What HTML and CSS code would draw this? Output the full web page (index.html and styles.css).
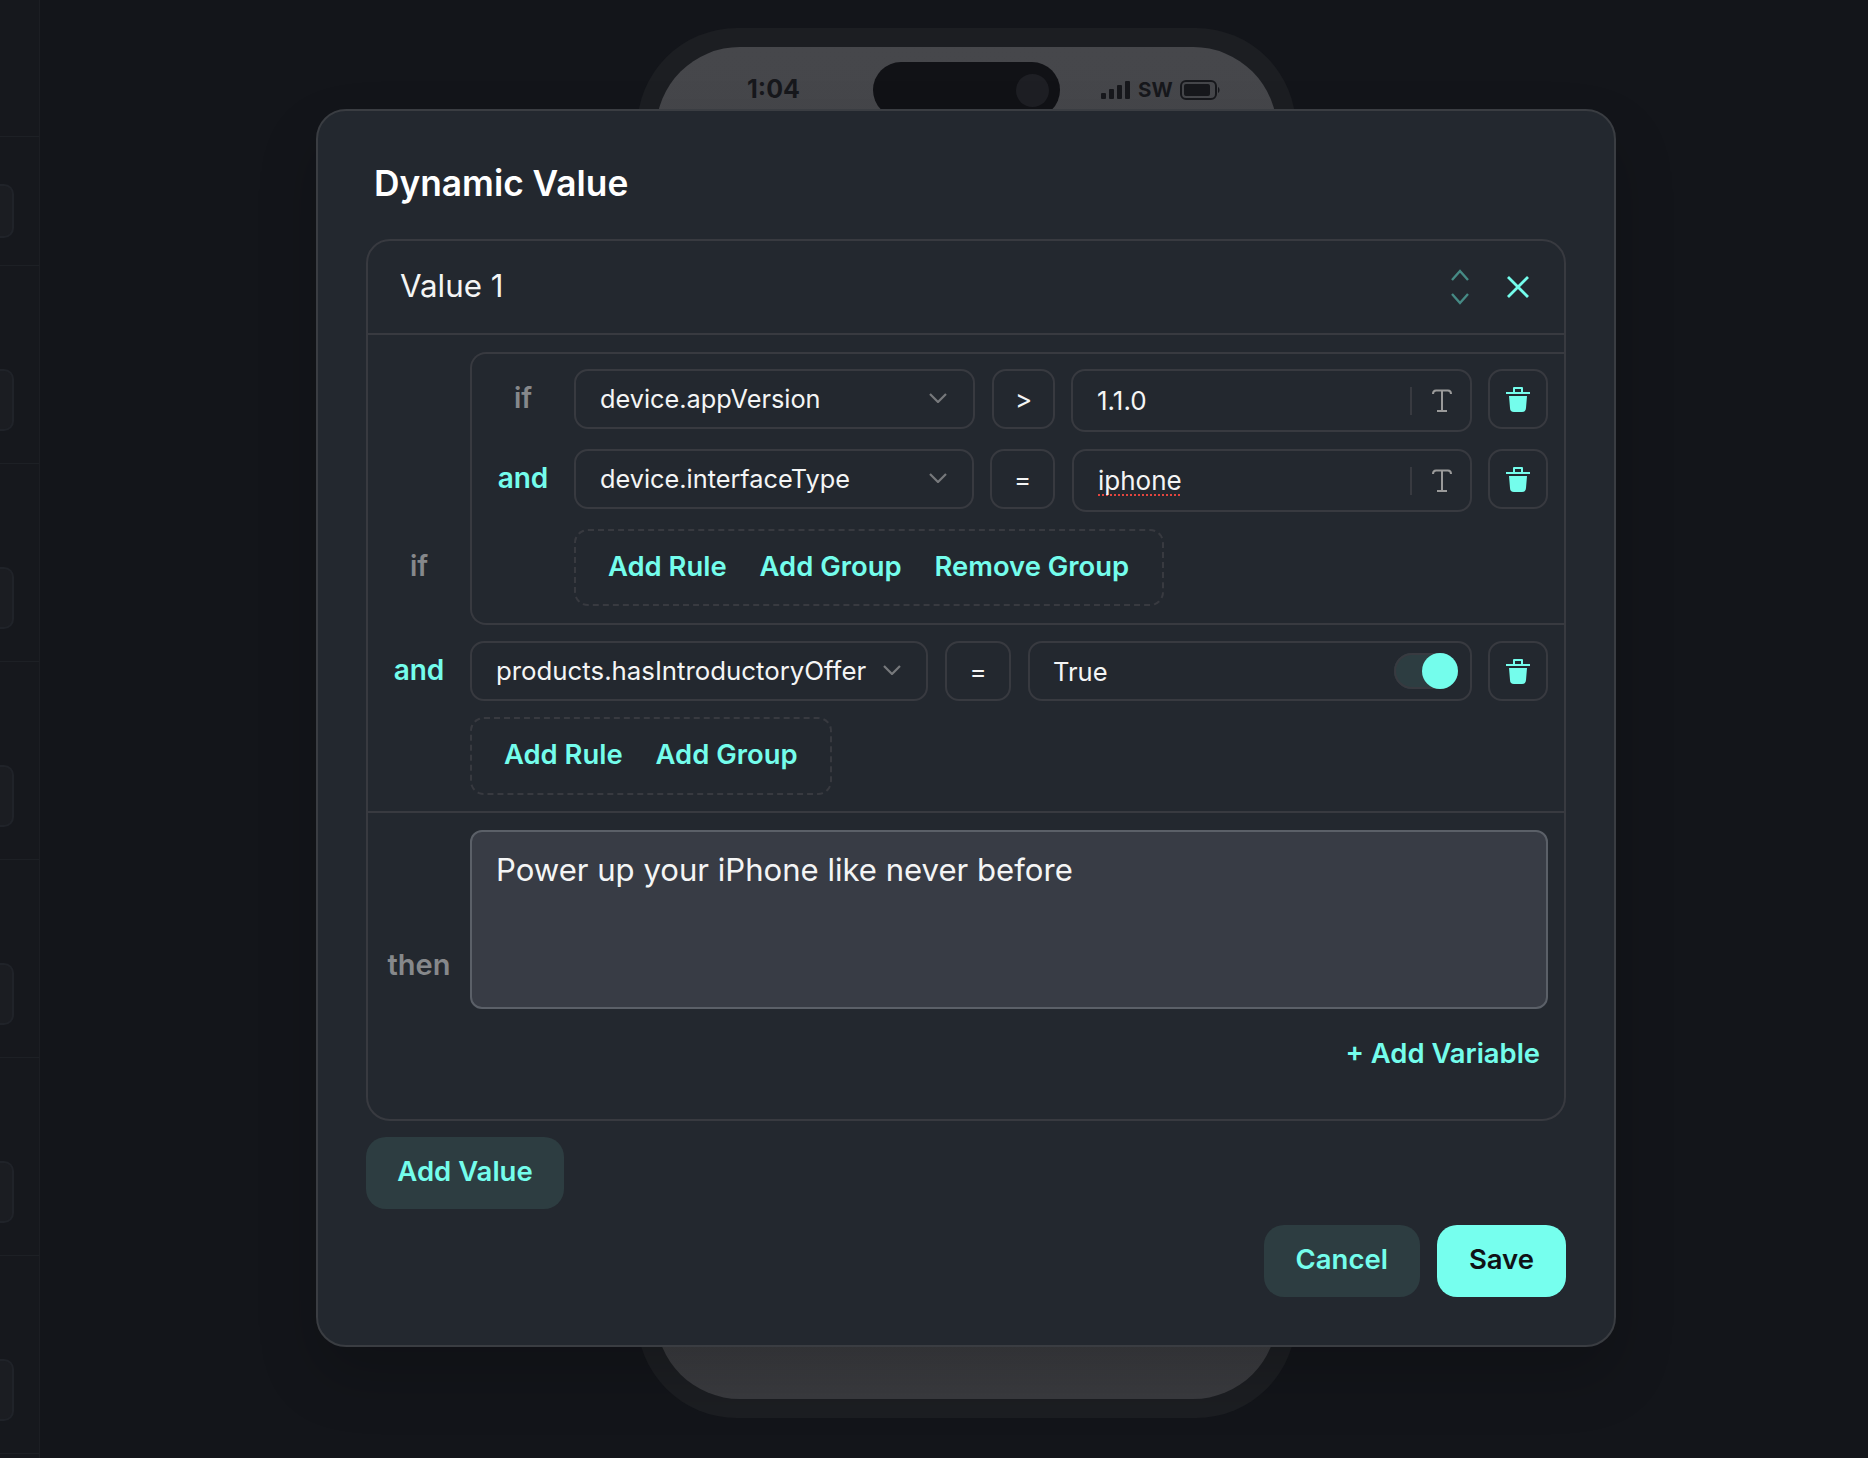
FILE: index.html
```html
<!DOCTYPE html>
<html lang="en">
<head>
    <meta charset="UTF-8">
    <meta name="viewport" content="width=device-width, initial-scale=1.0">
    <title>Dynamic Value</title>
    <link rel="stylesheet" href="styles.css">
</head>
<body>
    <aside class="sidebar">
        <div class="side-row side-row-top"></div>
        <div class="side-row side-row-short"><span class="side-thumb"></span></div>
        <div class="side-row"><span class="side-thumb"></span></div>
        <div class="side-row"><span class="side-thumb"></span></div>
        <div class="side-row"><span class="side-thumb"></span></div>
        <div class="side-row"><span class="side-thumb"></span></div>
        <div class="side-row"><span class="side-thumb"></span></div>
        <div class="side-row"><span class="side-thumb"></span></div>
    </aside>

    <main class="stage">
        <div class="phone">
            <div class="phone-screen">
                <div class="status-bar">
                    <span class="status-time">1:04</span>
                    <div class="island"><span class="camera"></span></div>
                    <div class="status-right">
                        <svg class="signal" width="30" height="18" viewBox="0 0 30 18"><rect x="0" y="12" width="5" height="6" rx="1"/><rect x="8" y="8" width="5" height="10" rx="1"/><rect x="16" y="4" width="5" height="14" rx="1"/><rect x="24" y="0" width="5" height="18" rx="1"/></svg>
                        <span class="carrier">SW</span>
                        <svg class="battery" width="40" height="20" viewBox="0 0 40 20"><rect x="1" y="1" width="35" height="18" rx="5" fill="none" stroke="#17181c" stroke-width="2"/><rect x="4" y="4" width="26" height="12" rx="2" fill="#17181c"/><path d="M38 7 C40 8 40 12 38 13 Z" fill="#17181c"/></svg>
                    </div>
                </div>
            </div>
        </div>
    </main>

    <section class="modal">
        <h1 class="modal-title">Dynamic Value</h1>

        <div class="value-card">
            <header class="value-head">
                <span class="value-name">Value 1</span>
                <svg class="sort-icon" width="20" height="36" viewBox="0 0 20 36" fill="none" stroke="#468a85" stroke-width="2.4"><path d="M2 11 L10 2 L18 11"/><path d="M2 25 L10 34 L18 25"/></svg>
                <svg class="close-icon" width="24" height="24" viewBox="0 0 24 24" fill="none" stroke="#74fdec" stroke-width="2.8"><path d="M2 2 L22 22 M22 2 L2 22"/></svg>
            </header>

            <div class="rules">
                <div class="rule-line rule-line-group">
                    <span class="joiner joiner-if joiner-outer">if</span>
                    <div class="group">
                        <div class="rule-line">
                            <span class="joiner joiner-if joiner-inner">if</span>
                            <div class="field select select-first"><span>device.appVersion</span>
                                <svg class="chev" width="18" height="10" viewBox="0 0 18 10" fill="none" stroke="#77797c" stroke-width="2.2"><path d="M1 1 L9 9 L17 1"/></svg>
                            </div>
                            <div class="field op op-a">&gt;</div>
                            <div class="field input input-first"><span>1.1.0</span>
                                <span class="input-sep"></span>
                                <svg class="type-icon" width="20" height="23" viewBox="0 0 20 23" fill="none" stroke="#9a9a9a" stroke-width="2"><path d="M1 5 Q1 1.500 4 1.500 H16 Q19 1.500 19 5 M10 1.500 V22 M5 22 H15"/></svg>
                            </div>
                            <button class="field trash">
                                <svg width="24" height="25" viewBox="0 0 24 25" fill="#74fdec"><path d="M0 5 H7 V1 Q7 0 8 0 H16 Q17 0 17 1 V5 H24 V7 H0 Z M9 2 V5 H15 V2 Z"/><path d="M3 9 H21 L20 21 Q20 25 16 25 H8 Q4 25 4 21 Z"/></svg>
                            </button>
                        </div>
                        <div class="rule-line">
                            <span class="joiner joiner-and joiner-inner">and</span>
                            <div class="field select select-second"><span>device.interfaceType</span>
                                <svg class="chev" width="18" height="10" viewBox="0 0 18 10" fill="none" stroke="#77797c" stroke-width="2.2"><path d="M1 1 L9 9 L17 1"/></svg>
                            </div>
                            <div class="field op op-b">=</div>
                            <div class="field input"><span class="misspelled">iphone</span>
                                <span class="input-sep"></span>
                                <svg class="type-icon" width="20" height="23" viewBox="0 0 20 23" fill="none" stroke="#9a9a9a" stroke-width="2"><path d="M1 5 Q1 1.500 4 1.500 H16 Q19 1.500 19 5 M10 1.500 V22 M5 22 H15"/></svg>
                            </div>
                            <button class="field trash">
                                <svg width="24" height="25" viewBox="0 0 24 25" fill="#74fdec"><path d="M0 5 H7 V1 Q7 0 8 0 H16 Q17 0 17 1 V5 H24 V7 H0 Z M9 2 V5 H15 V2 Z"/><path d="M3 9 H21 L20 21 Q20 25 16 25 H8 Q4 25 4 21 Z"/></svg>
                            </button>
                        </div>
                        <div class="actions actions-inner">
                            <a class="link">Add Rule</a>
                            <a class="link">Add Group</a>
                            <a class="link">Remove Group</a>
                        </div>
                    </div>
                </div>

                <div class="rule-line rule-line-outer">
                    <span class="joiner joiner-and joiner-outer joiner-mid">and</span>
                    <div class="field select select-products"><span>products.hasIntroductoryOffer</span>
                        <svg class="chev" width="18" height="10" viewBox="0 0 18 10" fill="none" stroke="#77797c" stroke-width="2.2"><path d="M1 1 L9 9 L17 1"/></svg>
                    </div>
                    <div class="field op op-c">=</div>
                    <div class="field input input-bool"><span>True</span>
                        <span class="toggle"><span class="toggle-knob"></span></span>
                    </div>
                    <button class="field trash">
                        <svg width="24" height="25" viewBox="0 0 24 25" fill="#74fdec"><path d="M0 5 H7 V1 Q7 0 8 0 H16 Q17 0 17 1 V5 H24 V7 H0 Z M9 2 V5 H15 V2 Z"/><path d="M3 9 H21 L20 21 Q20 25 16 25 H8 Q4 25 4 21 Z"/></svg>
                    </button>
                </div>

                <div class="actions actions-outer">
                    <a class="link">Add Rule</a>
                    <a class="link">Add Group</a>
                </div>
            </div>

            <div class="then-block">
                <span class="joiner joiner-then">then</span>
                <div class="then-text">Power up your iPhone like never before</div>
            </div>
            <div class="variable-line"><a class="link">+ Add Variable</a></div>
        </div>

        <button class="btn btn-soft btn-add">Add Value</button>

        <footer class="modal-foot">
            <button class="btn btn-soft">Cancel</button>
            <button class="btn btn-solid">Save</button>
        </footer>
    </section>
</body>
</html>
```

FILE: styles.css
```css
* {
    box-sizing: border-box;
}
body {
    margin: 0;
    width: 1868px;
    height: 1458px;
    overflow: hidden;
    display: flex;
    background: #13151a;
    color: #f4f5f5;
    font-family: Inter, "Noto Sans", sans-serif;
}

/* faded app behind the dialog */
.sidebar {
    width: 40px;
    flex: none;
    background: #16181d;
    border-right: 1px solid #1c1e23;
}
.side-row {
    height: 198px;
    display: flex;
    align-items: flex-end;
    padding-bottom: 32px;
    border-bottom: 1px solid #1d2025;
}
.side-row-top {
    height: 137px;
}
.side-row-short {
    height: 129px;
    padding-bottom: 27px;
}
.side-row-short .side-thumb {
    height: 54px;
}
.side-thumb {
    width: 14px;
    height: 62px;
    background: #1b1d22;
    border: 2px solid #202329;
    border-left: 0;
    border-radius: 0 10px 10px 0;
}

.stage {
    flex: 1;
    display: flex;
    justify-content: center;
    padding-top: 28px;
}
.phone {
    width: 659px;
    height: 1390px;
    margin-left: 25px;
    padding: 19px;
    background: #1c1e22;
    border-radius: 100px;
}
.phone-screen {
    height: 100%;
    background: linear-gradient(#46474b, #3a3b3f);
    border-radius: 84px;
    padding-top: 15px;
}
.status-bar {
    display: flex;
    align-items: flex-start;
    color: #17181c;
}
.status-time {
    width: 217px;
    padding: 12px 0 0 91px;
    font-size: 25px;
    font-weight: 700;
    line-height: 30px;
}
.island {
    width: 187px;
    height: 56px;
    display: flex;
    align-items: center;
    justify-content: flex-end;
    padding-right: 11px;
    background: #111216;
    border-radius: 28px;
}
.camera {
    width: 33px;
    height: 33px;
    border-radius: 50%;
    background: #1e1f24;
}
.status-right {
    display: flex;
    align-items: center;
    gap: 7px;
    padding: 18px 0 0 41px;
}
.signal {
    fill: #17181c;
}
.carrier {
    font-size: 20.500px;
    font-weight: 700;
    line-height: 18px;
}

/* dialog */
.modal {
    position: absolute;
    left: 316px;
    top: 109px;
    width: 1300px;
    height: 1238px;
    padding: 0 48px;
    background: #23282f;
    border: 2px solid #3a3d42;
    border-radius: 30px;
    box-shadow: 0 30px 60px rgba(0, 0, 0, 0.18);
}
.modal-title {
    margin: 0;
    height: 128px;
    padding-left: 8px;
    font-size: 35.300px;
    font-weight: 600;
    line-height: 145px;
    color: #fff;
}
.value-card {
    height: 882px;
    border: 2px solid #383a40;
    border-radius: 24px;
}
.value-head {
    height: 94px;
    display: flex;
    align-items: center;
    padding: 0 34px 1px 32px;
    border-bottom: 2px solid #383a40;
}
.value-name {
    flex: 1;
    margin-bottom: 1px;
    font-size: 31.300px;
}
.sort-icon {
    margin-right: 36px;
}

.rules {
    padding: 17px 0 16px;
    border-bottom: 2px solid #383a40;
    display: flex;
    flex-direction: column;
}
.rule-line {
    display: flex;
    align-items: flex-start;
}
.rule-line-group {
    margin-bottom: 16px;
}
.rule-line-outer {
    padding-right: 16px;
    margin-bottom: 16px;
}
.group {
    flex: 1;
    display: flex;
    flex-direction: column;
    gap: 17px;
    padding: 15px 16px 17px 0;
    border: 2px solid #383a40;
    border-right: 0;
    border-radius: 16px 0 0 16px;
}
.joiner {
    flex: none;
    text-align: center;
    font-size: 28px;
    font-weight: 600;
    line-height: 32px;
}
.joiner-if,
.joiner-then {
    color: #86888b;
}
.joiner-and {
    color: #74fdec;
}
.joiner-outer {
    width: 102px;
    align-self: flex-end;
    margin-bottom: 43px;
}
.joiner-mid {
    align-self: center;
    margin-bottom: 2px;
}
.joiner-inner {
    width: 102px;
    margin-top: 13px;
}

.field {
    height: 60px;
    display: flex;
    align-items: center;
    flex: none;
    background: none;
    border: 2px solid #383a40;
    border-radius: 14px;
    font: inherit;
    font-size: 26px;
    color: #f4f5f5;
}
.select {
    justify-content: space-between;
    padding: 0 25px 2px 24px;
    font-size: 25.300px;
}
.select-first {
    width: 401px;
    padding-right: 26px;
}
.select-second {
    width: 400px;
}
.select-products {
    width: 458px;
    padding-right: 25px;
    font-size: 25.800px;
}
.op {
    justify-content: center;
}
.op-a {
    width: 63px;
    margin-left: 17px;
}
.op-b {
    width: 65px;
    margin-left: 16px;
}
.op-c {
    width: 66px;
    margin-left: 17px;
}
.input {
    height: 63px;
    width: 400px;
    margin-left: 17px;
    padding: 0 18px 0 24px;
}
.input-first {
    width: 401px;
    margin-left: 16px;
}
.input > span:first-child {
    flex: 1;
}
.input-sep {
    width: 2px;
    height: 28px;
    margin-right: 20px;
    background: #383a40;
}
.misspelled {
    text-decoration: underline dotted #e2453f 2px;
    text-underline-offset: 4px;
    text-decoration-skip-ink: none;
}
.input-bool {
    height: 60px;
    width: 444px;
    margin-left: 17px;
    padding: 0 12px 0 23px;
    font-size: 25.500px;
}
.toggle {
    width: 64px;
    height: 36px;
    display: flex;
    justify-content: flex-end;
    background: #2d3d41;
    border-radius: 18px;
    box-shadow: inset 0 0 0 2px #383a40;
}
.toggle-knob {
    width: 36px;
    height: 36px;
    border-radius: 50%;
    background: #74fdec;
}
.trash {
    width: 60px;
    margin-left: 16px;
    padding: 0;
    justify-content: center;
}

.actions {
    display: flex;
    align-items: center;
    gap: 33px;
    height: 78px;
    padding: 0 32px 4px;
    border: 2px dashed #383a40;
    border-radius: 14px;
}
.actions-inner {
    width: 590px;
    height: 77px;
    margin-left: 102px;
}
.actions-outer {
    width: 362px;
    margin-left: 102px;
}
.link {
    font-size: 27.400px;
    font-weight: 600;
    color: #74fdec;
    white-space: nowrap;
}

.then-block {
    display: flex;
    align-items: flex-start;
    padding: 17px 16px 0 0;
}
.joiner-then {
    width: 102px;
    margin-top: 119px;
    font-size: 29px;
}
.then-text {
    flex: 1;
    height: 179px;
    padding: 13px 24px;
    background: #383c45;
    border: 2px solid #5b6068;
    border-radius: 12px;
    font-size: 31.100px;
    line-height: 50px;
}
.variable-line {
    display: flex;
    justify-content: flex-end;
    padding: 27px 24px 0;
}

.btn {
    height: 72px;
    padding: 0 32px 4px;
    border: 0;
    border-radius: 20px;
    font-family: inherit;
    font-size: 27.500px;
    font-weight: 600;
}
.btn-soft {
    background: #2d3d41;
    color: #74fdec;
}
.btn-solid {
    background: #76ffee;
    color: #101216;
}
.btn-add {
    display: block;
    width: 198px;
    margin-top: 16px;
    padding: 0 0 4px;
}
.modal-foot {
    display: flex;
    justify-content: flex-end;
    gap: 17px;
    margin-top: 16px;
}
```
